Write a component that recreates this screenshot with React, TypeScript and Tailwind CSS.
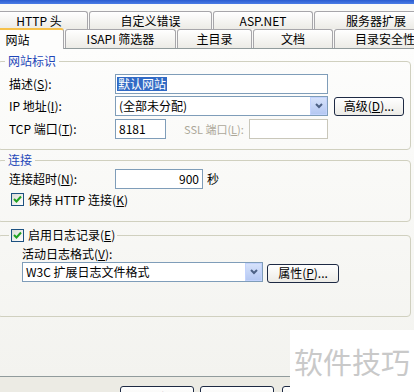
import React from "react";

function U({ c }: { c: string }) {
  return <span className="underline underline-offset-[1px]">{c}</span>;
}

function Check() {
  return (
    <span className="w-[13px] h-[13px] shrink-0 border border-[#1c5180] bg-gradient-to-br from-[#dcdcd6] to-white flex items-center justify-center">
      <svg width="9" height="9" viewBox="0 0 9 9">
        <path d="M1 4 L3.5 6.5 L8 1.5" stroke="#21a121" strokeWidth="2" fill="none" />
      </svg>
    </span>
  );
}

function Arrow() {
  return (
    <span className="w-[17px] h-full shrink-0 bg-gradient-to-b from-[#d6e2fb] to-[#b5c8f2] border border-[#c3d3fd] flex items-center justify-center">
      <svg width="8" height="6" viewBox="0 0 8 6">
        <path d="M1 1 L4 4 L7 1" stroke="#4d6185" strokeWidth="2" fill="none" />
      </svg>
    </span>
  );
}

function Btn({ children, w }: { children: React.ReactNode; w: string }) {
  return (
    <div
      className={`${w} h-[19px] shrink-0 border border-[#1e2a44] rounded-[3px] bg-gradient-to-b from-white to-[#ecebe6] flex items-center justify-center`}
    >
      {children}
    </div>
  );
}

function Tab({ w, children, cls = "" }: { w: string; children: React.ReactNode; cls?: string }) {
  return (
    <div
      className={`${w} ${cls} shrink-0 border border-b-0 border-[#a7a6aa] rounded-t-[3px] bg-gradient-to-b from-white to-[#ecebe6] flex items-center justify-center`}
    >
      {children}
    </div>
  );
}

export default function App() {
  return (
    <div className="relative w-[414px] h-[392px] overflow-hidden bg-[#ecebe4] text-[12px] leading-[14px] text-black font-['Noto_Sans_CJK_SC','Noto_Sans',sans-serif]">
      <div className="h-[4px] bg-gradient-to-b from-[#2a5bd0] to-[#4a7ce6]" />
      <div className="bg-[#f9f9f7] pt-[7px]">
        <div className="flex gap-[1px] h-[18px]">
          <Tab w="w-[98px]" cls="ml-[-10px]">HTTP 头</Tab>
          <Tab w="w-[123px]">自定义错误</Tab>
          <Tab w="w-[100px]">ASP.NET</Tab>
          <Tab w="w-[124px]">服务器扩展</Tab>
        </div>
        <div className="flex items-end gap-[1px] h-[19px]">
          <div className="relative z-10 w-[93px] ml-[-29px] h-[21px] mb-[-1px] shrink-0 border border-b-0 border-[#a7a6aa] border-t-2 border-t-[#f6c14a] rounded-t-[3px] bg-[#fdfdfc] flex items-center justify-center">
            网站
          </div>
          <Tab w="w-[111px]" cls="h-[19px]">ISAPI 筛选器</Tab>
          <Tab w="w-[75px]" cls="h-[19px]">主目录</Tab>
          <Tab w="w-[80px]" cls="h-[19px]">文档</Tab>
          <Tab w="w-[102px]" cls="h-[19px]">目录安全性</Tab>
        </div>
      </div>
      <div className="h-[329px] border-t border-b border-[#919b9c] bg-gradient-to-b from-[#fdfdfc] to-[#f3f3ef] pt-[5px]">
        {/* 网站标识 */}
        <fieldset className="ml-[-3px] w-[414px] border border-[#d0d0bf] rounded-[4px] pb-[10px]">
          <legend className="ml-[7px] px-[3px] text-[#1f47b8]">网站标识</legend>
          <div className="flex items-center h-[20px] mt-[6px] pl-[11px]">
            <span className="w-[106px]">描述(<U c="S" />):</span>
            <div className="w-[213px] h-[20px] border border-[#7f9db9] bg-white flex items-center pl-[1px]">
              <span className="bg-[#316ac5] text-white px-[1px]">默认网站</span>
            </div>
          </div>
          <div className="flex items-center h-[20px] mt-[2px] pl-[11px]">
            <span className="w-[106px]">IP 地址(<U c="I" />):</span>
            <div className="w-[213px] h-[20px] border border-[#7f9db9] bg-white flex items-center">
              <span className="flex-1 pl-[3px]">(全部未分配)</span>
              <Arrow />
            </div>
            <div className="ml-[6px]">
              <Btn w="w-[70px]">高级(<U c="D" />)...</Btn>
            </div>
          </div>
          <div className="flex items-center h-[20px] mt-[3px] pl-[11px]">
            <span className="w-[106px]">TCP 端口(<U c="T" />):</span>
            <div className="w-[51px] h-[20px] border border-[#7f9db9] bg-white flex items-center pl-[3px]">8181</div>
            <span className="ml-[18px] w-[65px] whitespace-nowrap text-[11px] text-[#aca899]">SSL 端口(<U c="L" />):</span>
            <div className="w-[79px] h-[20px] border border-[#c9c7ba] bg-white" />
          </div>
        </fieldset>

        {/* 连接 */}
        <fieldset className="mt-[3px] ml-[-3px] w-[414px] border border-[#d0d0bf] rounded-[4px] pb-[15px]">
          <legend className="ml-[7px] px-[3px] text-[#1f47b8]">连接</legend>
          <div className="flex items-center h-[20px] mt-[2px] pl-[11px]">
            <span className="w-[106px]">连接超时(<U c="N" />):</span>
            <div className="w-[88px] h-[20px] border border-[#7f9db9] bg-white flex items-center justify-end pr-[3px]">900</div>
            <span className="ml-[4px]">秒</span>
          </div>
          <div className="flex items-center h-[13px] mt-[4px] pl-[13px] gap-[4px]">
            <Check />
            <span>保持 HTTP 连接(<U c="K" />)</span>
          </div>
        </fieldset>

        {/* 日志 */}
        <fieldset className="mt-[6px] ml-[-3px] w-[414px] border border-[#d0d0bf] rounded-[4px] pb-[34px]">
          <legend className="ml-[11px] px-[2px] flex items-center gap-[4px]">
            <Check />
            <span>启用日志记录(<U c="E" />)</span>
          </legend>
          <div className="mt-[5px] pl-[24px] h-[14px]">活动日志格式(<U c="V" />):</div>
          <div className="flex items-center mt-[1px] pl-[24px] h-[20px]">
            <div className="w-[241px] h-[20px] border border-[#7f9db9] bg-white flex items-center">
              <span className="flex-1 pl-[3px]">W3C 扩展日志文件格式</span>
              <Arrow />
            </div>
            <div className="ml-[4px] mt-[2px]">
              <Btn w="w-[72px]">属性(<U c="P" />)...</Btn>
            </div>
          </div>
        </fieldset>
      </div>
      <div className="flex pt-[9px] pl-[120px] gap-[6px]">
        <div className="w-[74px] h-[23px] border border-[#1e2a44] rounded-[3px] bg-gradient-to-b from-white to-[#ecebe6] flex items-center justify-center">
          确定
        </div>
        <div className="w-[74px] h-[23px] border border-[#1e2a44] rounded-[3px] bg-gradient-to-b from-white to-[#ecebe6] flex items-center justify-center">
          取消
        </div>
        <div className="w-[74px] h-[23px] ml-[2px] border border-[#1e2a44] rounded-[3px] bg-gradient-to-b from-white to-[#ecebe6] flex items-center justify-center">
          应用
        </div>
      </div>
      <div className="absolute left-[290px] top-[330px] w-[124px] h-[62px] bg-white flex items-center justify-center text-[29px] leading-[32px] text-[#c9c9c9]">
        软件技巧
      </div>
    </div>
  );
}
